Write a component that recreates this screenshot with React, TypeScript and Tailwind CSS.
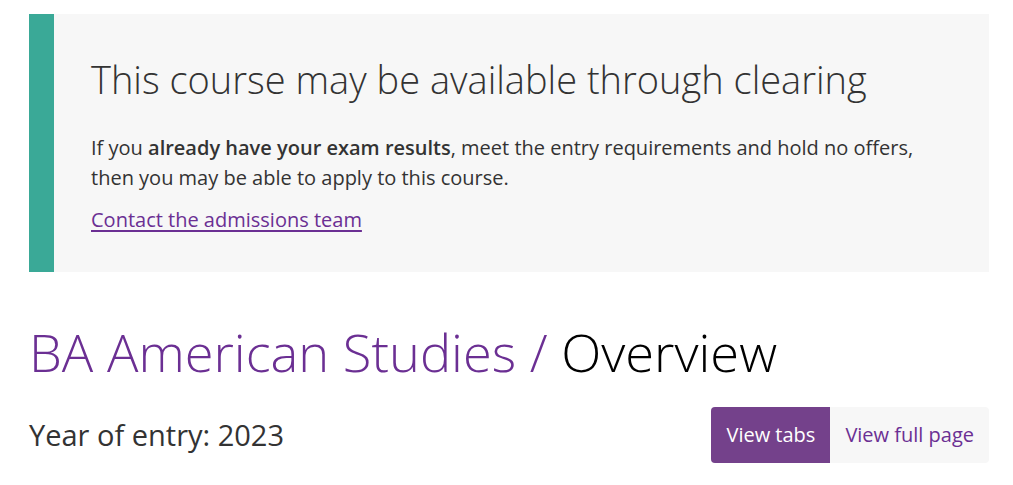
import React from 'react';

const App: React.FC = () => {
  return (
    <div className="min-h-screen bg-white px-[29px] pt-[14px] text-[#333]" style={{ fontFamily: '"Open Sans", sans-serif' }}>
      {/* Clearing notice */}
      <div className="flex h-[258px] w-[960px] bg-[#f7f7f7]">
        <div className="w-[25px] shrink-0 bg-[#3aa997]" />
        <div className="pl-[37px] pr-[40px] pt-[38px]">
          <h2 className="text-[38px] font-light leading-[54px] text-[#333]">
            This course may be available through clearing
          </h2>
          <p className="mt-[27px] text-[20px] leading-[30px] text-[#333]">
            If you <strong className="font-semibold">already have your exam results</strong>, meet the entry requirements and hold no offers,
            <br />
            then you may be able to apply to this course.
          </p>
          <a href="#" className="mt-[12px] inline-block text-[20px] leading-[30px] text-[#6b2f93] underline underline-offset-[3px]">
            Contact the admissions team
          </a>
        </div>
      </div>

      {/* Title */}
      <h1 className="mt-[40px] text-[52.4px] font-light leading-[80px]">
        <span className="text-[#6b2f93]">BA American Studies / </span>
        <span className="text-black">Overview</span>
      </h1>

      <div className="mt-[15px] flex w-[960px] items-center justify-between">
        <p className="text-[29px] leading-[40px] text-[#333]">Year of entry: 2023</p>
        <div className="flex h-[56px] overflow-hidden rounded-[4px] bg-[#f7f7f7] text-[20px]">
          <button className="bg-[#74418b] px-[15px] text-white">View tabs</button>
          <button className="px-[15px] text-[#6b2f93]">View full page</button>
        </div>
      </div>
    </div>
  );
};

export default App;
